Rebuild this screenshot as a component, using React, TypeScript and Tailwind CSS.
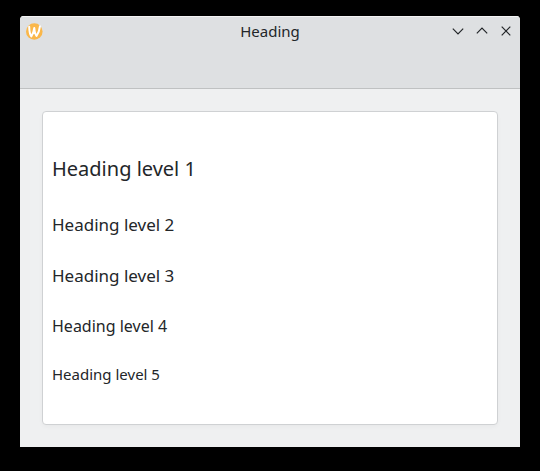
export default function App() {
  return (
    <div className="h-[471px] w-[540px] bg-black px-5 pt-4 font-['Noto_Sans',sans-serif] text-[#232629]">
      <div className="flex h-[431px] flex-col overflow-hidden rounded-t-[4px] bg-[#eff0f1]">
        <header className="h-[73px] border-b border-[#bfc1c2] bg-[#dee0e2] shadow-[inset_0_1px_0_#f4f4f5]">
          <div className="grid h-[30px] grid-cols-[80px_1fr_80px] items-center">
            <svg className="ml-[6px]" width="17" height="17" viewBox="0 0 17 17" fill="none">
              <circle cx="8.3" cy="8.5" r="8.3" fill="#fab74a" />
              <path d="M3.200 3.800C3.300 8 4 11.800 5.300 13.500 6.800 11.500 7.800 8.500 8.300 5 8.600 8.500 9.300 11.500 10.500 13 12.300 10.500 13.500 7.500 14 3.200" stroke="#fff" strokeWidth="2" strokeLinecap="round" strokeLinejoin="round" />
            </svg>
            <h1 className="text-center text-[15px] leading-5">Heading</h1>
            <div className="flex justify-end gap-3 pr-2">
              <svg width="12" height="12" viewBox="0 0 12 12" fill="none" stroke="#232629" strokeWidth="1.200"><path d="M.8 3.700 6 8.900l5.200-5.200" /></svg>
              <svg width="12" height="12" viewBox="0 0 12 12" fill="none" stroke="#232629" strokeWidth="1.200"><path d="M.8 8.300 6 3.100l5.200 5.200" /></svg>
              <svg width="12" height="12" viewBox="0 0 12 12" fill="none" stroke="#232629" strokeWidth="1.200"><path d="m1.700 1.700 8.600 8.600m0-8.600-8.600 8.600" /></svg>
            </div>
          </div>
        </header>
        <main className="flex-1 px-[22px] pt-[22px]">
          <section className="h-[314px] rounded-[4px] border border-[#cfd1d3] bg-white pl-[9px] pt-[42px] shadow-[0_2px_4px_rgba(0,0,0,0.03)]">
            <h1 className="h-[57px] text-[20px] leading-[30px]">Heading level 1</h1>
            <h2 className="h-[51px] text-[17px] leading-[28px]">Heading level 2</h2>
            <h3 className="h-[51px] text-[17px] leading-[28px]">Heading level 3</h3>
            <h4 className="h-[49px] text-[16px] leading-[26px]">Heading level 4</h4>
            <h5 className="text-[15px] leading-[24px]">Heading level 5</h5>
          </section>
        </main>
      </div>
    </div>
  );
}
